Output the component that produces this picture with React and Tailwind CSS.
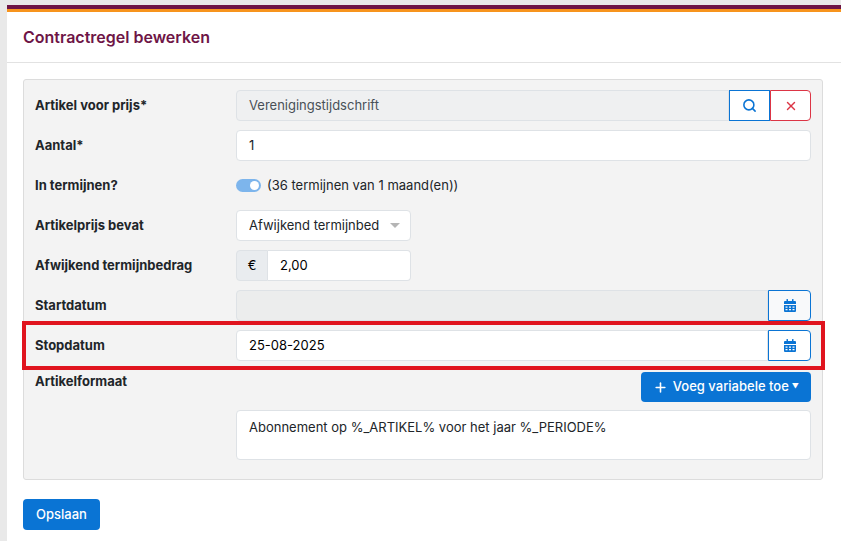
import { Search, X, Plus } from 'lucide-react'

const font = { fontFamily: 'Inter, "Noto Sans", sans-serif' }

function Row({ label, children, className = '' }) {
  return (
    <div className={`flex items-center h-[31px] ${className}`}>
      <div className="w-[212px] pl-[11px] text-[13px] font-bold text-[#212529]">{label}</div>
      <div className="flex-1 pr-[11px]">{children}</div>
    </div>
  )
}

// filled calendar glyph
const Cal = () => (
  <svg width="12" height="13" viewBox="0 0 12 13" fill="#0a74d4">
    <rect x="2.5" y="0" width="1.5" height="3" rx="0.5" />
    <rect x="8" y="0" width="1.5" height="3" rx="0.5" />
    <path d="M1 2h10a1 1 0 0 1 1 1v2H0V3a1 1 0 0 1 1-1z" />
    <path d="M0 6h12v6a1 1 0 0 1-1 1H1a1 1 0 0 1-1-1z M1.5 7.5v1.3h2v-1.3z M5 7.5v1.3h2v-1.3z M8.5 7.5v1.3h2v-1.3z M1.5 10v1.3h2v-1.3z M5 10v1.3h2v-1.3z M8.5 10v1.3h2v-1.3z" fillRule="evenodd" />
  </svg>
)

const inputCls = 'h-[31px] border border-[#dee2e6] rounded-[4px] bg-white px-3 flex items-center text-[13px] text-[#212529]'

export default function App() {
  return (
    <div className="h-[541px] w-[841px] bg-[#e9e9e9] pl-[7px] pt-[5px] overflow-hidden" style={font}>
      <div className="h-full bg-white">
        <div className="h-[4px] bg-[#6e1546]" />
        <div className="h-[3px] bg-[#f7941d]" />
        <div className="h-[51px] border-b border-[#e2e2e2] flex items-center px-4">
          <h1 className="text-[16px] font-semibold text-[#6e1546]">Contractregel bewerken</h1>
        </div>
        <div className="pl-4 pr-[18px] pt-4">
          <div className="bg-[#f3f3f3] border border-[#dcdcdc] rounded-[3px] pt-[10px] pb-[19px] flex flex-col gap-[9px]">
            <Row label="Artikel voor prijs*">
              <div className="flex h-[31px]">
                <div className="flex-1 border border-[#dee2e6] rounded-l-[4px] bg-[#eff0f1] px-3 flex items-center text-[13px] text-[#495057]">Verenigingstijdschrift</div>
                <button className="w-[41px] border border-[#0a74d4] bg-white flex items-center justify-center"><Search size={15} strokeWidth={2.5} className="text-[#0a74d4]" /></button>
                <button className="w-[41px] border border-[#dc3545] rounded-r-[4px] bg-white flex items-center justify-center"><X size={14} strokeWidth={2.5} className="text-[#dc3545]" /></button>
              </div>
            </Row>
            <Row label="Aantal*">
              <div className={`${inputCls} bg-[#fcfcfc]`}>1</div>
            </Row>
            <Row label="In termijnen?">
              <div className="flex items-center gap-[6px] text-[13px] text-[#212529]">
                <span className="w-[25px] h-[13px] rounded-full bg-[#7db5ec] flex items-center justify-end pr-[2px]"><span className="w-[9px] h-[9px] rounded-full bg-white" /></span>
                (36 termijnen van 1 maand(en))
              </div>
            </Row>
            <Row label="Artikelprijs bevat">
              <div className={`${inputCls} w-[175px] justify-between pr-[10px]`}>
                <span className="overflow-hidden whitespace-nowrap w-[130px]">Afwijkend termijnbedrag</span>
                <span className="w-0 h-0 border-l-[5px] border-r-[5px] border-t-[5px] border-l-transparent border-r-transparent border-t-[#b5b5b5]" />
              </div>
            </Row>
            <Row label="Afwijkend termijnbedrag">
              <div className="flex h-[31px] w-[175px]">
                <div className="w-[32px] border border-[#dee2e6] rounded-l-[4px] bg-[#e9ecef] flex items-center justify-center text-[13px]">€</div>
                <div className="flex-1 border border-l-0 border-[#dee2e6] rounded-r-[4px] bg-white px-3 flex items-center text-[13px]">2,00</div>
              </div>
            </Row>
            <Row label="Startdatum">
              <div className="flex h-[31px]">
                <div className="flex-1 border border-[#dee2e6] rounded-l-[4px] bg-[#eceded]" />
                <button className="w-[43px] border border-[#0a74d4] rounded-r-[4px] bg-[#f8f9fa] flex items-center justify-center"><Cal /></button>
              </div>
            </Row>
            <div className="relative">
              <div className="absolute left-[-2px] right-[-3px] top-[-9px] bottom-[-9px] border-[4px] border-[#e0141e] pointer-events-none" />
              <Row label="Stopdatum">
                <div className="flex h-[31px]">
                  <div className="flex-1 border border-[#dee2e6] rounded-l-[4px] bg-white px-3 flex items-center text-[13px]">25-08-2025</div>
                  <button className="w-[43px] border border-[#0a74d4] rounded-r-[4px] bg-white flex items-center justify-center"><Cal /></button>
                </div>
              </Row>
            </div>
            <Row label="Artikelformaat" className="mt-[2px] !h-[30px] items-start">
              <div className="flex justify-end">
                <button className="h-[30px] px-3 rounded-[4px] bg-[#0a74d4] text-white text-[13px] font-medium flex items-center gap-[5px]">
                  <Plus size={15} strokeWidth={2.5} /> Voeg variabele toe <span className="text-[7px] -ml-[2px]">▼</span>
                </button>
              </div>
            </Row>
            <div className="pl-[212px] pr-[11px] -mt-[1px]">
              <div className="h-[50px] border border-[#dee2e6] rounded-[4px] bg-white px-3 pt-[7px] text-[13px] text-[#212529]">Abonnement op %_ARTIKEL% voor het jaar %_PERIODE%</div>
            </div>
          </div>
          <button className="mt-[19px] h-[31px] px-[13px] rounded-[4px] bg-[#0a74d4] text-white text-[13px] font-medium">Opslaan</button>
        </div>
      </div>
    </div>
  )
}
